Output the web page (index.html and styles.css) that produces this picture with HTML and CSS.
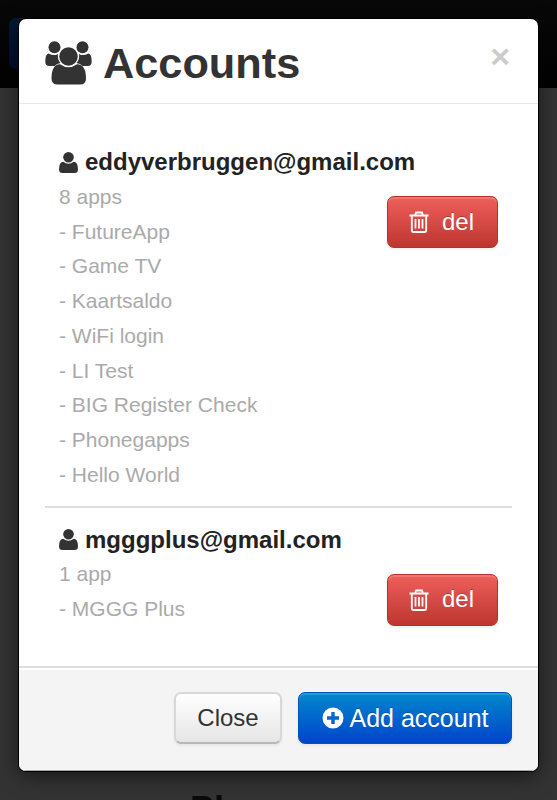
FILE: index.html
```html
<!doctype html>
<html lang="en">

<head>
  <meta charset="UTF-8" />
  <meta name="viewport" content="width=device-width, initial-scale=1.0" />
  <title>Accounts</title>
  <link rel="stylesheet" href="styles.css">
</head>

<body>
  <div class="page">
    <div class="navbar"><span class="nav-btn"></span></div>
    <h2 class="page-title">Pl</h2>
  </div>

  <div class="modal">
    <div class="modal-header">
      <h3>
        <svg class="icon-group" viewBox="0 0 47 44">
          <circle cx="9.500" cy="6.200" r="6" />
          <circle cx="37.500" cy="6.200" r="6" />
          <path d="M3.500 12.500q5.500 3 9.500.4A11 11 0 0 0 15.500 22Q12 22.500 9.500 25H4.500Q.3 25 .3 20.500.3 13 3.500 12.500z" />
          <path d="M43.500 12.500q-5.500 3-9.500.4A11 11 0 0 1 31.500 22Q35 22.500 37.500 25h5Q46.700 25 46.700 20.500 46.700 13 43.500 12.500z" />
          <circle cx="23.500" cy="15.500" r="9.300" />
          <path d="M15 23.300q8.500 6 17 0Q41 23.500 41 37.500 41 43.500 35 43.500H12.500Q6.500 43.500 6.500 37.500 6.500 23.500 15 23.300z" />
        </svg>
        <span>Accounts</span>
      </h3>
      <span class="close">×</span>
    </div>

    <div class="modal-body">
      <div class="account">
        <div class="info">
          <strong>
            <svg class="icon-user" viewBox="0 0 19 21">
              <circle cx="9.500" cy="5.300" r="5.300" />
              <path d="M4.300 9.700q5.200 4 10.400 0Q19 10 19 17.500q0 3.500-3.500 3.500h-12Q0 21 0 17.500 0 10 4.300 9.700z" />
            </svg>
            <span>eddyverbruggen@gmail.com</span>
          </strong>
          <ul>
            <li>8 apps</li>
            <li>- FutureApp</li>
            <li>- Game TV</li>
            <li>- Kaartsaldo</li>
            <li>- WiFi login</li>
            <li>- LI Test</li>
            <li>- BIG Register Check</li>
            <li>- Phonegapps</li>
            <li>- Hello World</li>
          </ul>
        </div>
        <a class="btn btn-danger">
          <svg class="icon-trash" viewBox="0 0 20 22">
            <path d="M.5 4.500h19M6 4.500l1-3h6l1 3M2.800 4.500v14.500q0 2 1.700 2h11q1.700 0 1.700-2V4.500M6.500 8v9.500M10 8v9.500M13.500 8v9.500" />
          </svg>
          <span>del</span>
        </a>
      </div>

      <div class="account">
        <div class="info">
          <strong>
            <svg class="icon-user" viewBox="0 0 19 21">
              <circle cx="9.500" cy="5.300" r="5.300" />
              <path d="M4.300 9.700q5.200 4 10.400 0Q19 10 19 17.500q0 3.500-3.500 3.500h-12Q0 21 0 17.500 0 10 4.300 9.700z" />
            </svg>
            <span>mgggplus@gmail.com</span>
          </strong>
          <ul>
            <li>1 app</li>
            <li>- MGGG Plus</li>
          </ul>
        </div>
        <a class="btn btn-danger">
          <svg class="icon-trash" viewBox="0 0 20 22">
            <path d="M.5 4.500h19M6 4.500l1-3h6l1 3M2.800 4.500v14.500q0 2 1.700 2h11q1.700 0 1.700-2V4.500M6.500 8v9.500M10 8v9.500M13.500 8v9.500" />
          </svg>
          <span>del</span>
        </a>
      </div>
    </div>

    <div class="modal-footer">
      <a class="btn btn-close">Close</a>
      <a class="btn btn-primary">
        <svg class="icon-plus" viewBox="0 0 22 22">
          <path fill-rule="evenodd" d="M11 .5a10.500 10.500 0 1 0 0 21 10.500 10.500 0 0 0 0-21zM9.300 5h3.400v4.300H17v3.400h-4.300V17H9.300v-4.300H5V9.300h4.300z" />
        </svg>
        <span>Add account</span>
      </a>
    </div>
  </div>
</body>

</html>
```

FILE: styles.css
```css
* {
  box-sizing: border-box;
}

body {
  margin: 0;
  height: 800px;
  overflow: hidden;
  padding: 19px;
  background: #333;
  color: #333;
  font-family: "Liberation Sans", Arial, sans-serif;
  font-size: 24px;
  line-height: 34.75px;
}

/* dimmed page behind the dialog */
.page {
  position: absolute;
  top: 0;
  left: 0;
  width: 100%;
  height: 800px;
  overflow: hidden;
  display: flex;
  flex-direction: column;
  justify-content: space-between;
}

.navbar {
  height: 88px;
  padding: 18px 9px;
  background: linear-gradient(#080808, #020202);
}

.nav-btn {
  display: block;
  width: 110px;
  height: 51px;
  border-radius: 7px;
  background: linear-gradient(#001a33, #000d2b);
}

.page-title {
  height: 7px;
  margin: 0;
  padding-left: 190px;
  font-size: 36px;
  line-height: 33px;
  color: #0a0a0a;
}

.modal {
  position: relative;
  height: 752px;
  display: flex;
  flex-direction: column;
  background: #fff;
  border-radius: 7px;
  overflow: hidden;
  box-shadow: 0 0 0 1px #000, 0 5px 20px 1px rgba(0, 0, 0, 0.5);
}

.modal-header {
  height: 85px;
  padding: 0 28px 0 26px;
  display: flex;
  justify-content: space-between;
  border-bottom: 1px solid #e8e8e8;
}

h3 {
  display: flex;
  align-items: center;
  gap: 11px;
  margin: 0;
  padding-top: 4px;
  font-size: 43.300px;
}

.icon-group {
  width: 47px;
  height: 44px;
  fill: #333;
}

.close {
  padding-top: 20px;
  font-size: 34px;
  font-weight: bold;
  color: #ccc;
}

.modal-body {
  flex: 1;
  padding: 27px 26px 0;
}

.account {
  display: flex;
  justify-content: space-between;
  align-items: flex-start;
  padding: 14px 14px 13px;
}

.account + .account {
  padding-top: 15px;
  border-top: 2px solid #ddd;
}

.info {
  width: 327px;
  white-space: nowrap;
}

strong {
  display: flex;
  align-items: center;
  gap: 7px;
  color: #222;
}

.icon-user {
  flex-shrink: 0;
  width: 19px;
  height: 21px;
  fill: #333;
}

ul {
  margin: 0;
  padding: 0;
  list-style: none;
  font-size: 21px;
  color: #aaa;
}

.btn {
  display: flex;
  align-items: center;
  justify-content: center;
  height: 52px;
  border: 1px solid #ccc;
  border-radius: 7px;
  box-shadow: inset 0 2px 0 rgba(255, 255, 255, 0.15), 0 2px 3px rgba(0, 0, 0, 0.06);
}

.btn-danger {
  width: 111px;
  margin-top: 51px;
  gap: 13px;
  padding-right: 2px;
  color: #fff;
  background: linear-gradient(#ee5f5b, #bd362f);
  border-color: #b8302c;
  text-shadow: 0 -1px 0 rgba(0, 0, 0, 0.25);
}

.icon-trash {
  width: 20px;
  height: 22px;
  fill: none;
  stroke: #fff;
  stroke-width: 1.800;
}

.modal-footer {
  height: 105px;
  padding: 24px 26px 0;
  display: flex;
  justify-content: flex-end;
  gap: 16px;
  background: #f4f4f4;
  border-top: 2px solid #ddd;
  box-shadow: inset 0 2px 0 #fff, inset 0 -1px 0 #aaa;
}

.btn-close {
  width: 108px;
  background: linear-gradient(#fff, #e6e6e6);
  border: 2px solid #d8d8d8;
  border-bottom-color: #b8b8b8;
}

.btn-primary {
  width: 214px;
  gap: 6px;
  font-size: 25px;
  color: #fff;
  background: linear-gradient(#08c, #04c);
  border-color: #0055b8;
  text-shadow: 0 -1px 0 rgba(0, 0, 0, 0.25);
}

.icon-plus {
  width: 22px;
  height: 22px;
  fill: #fff;
}
```
